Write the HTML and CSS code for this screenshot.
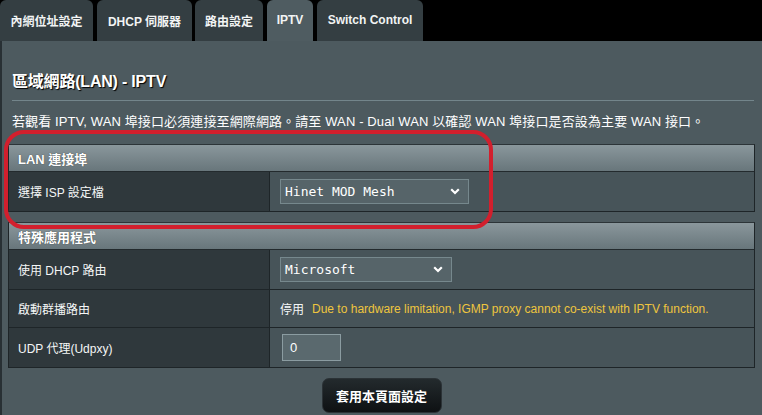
FILE: index.html
```html
<!DOCTYPE html>
<html lang="zh-Hant">
<head>
<meta charset="utf-8">
<title>IPTV</title>
<link rel="stylesheet" href="styles.css">
</head>
<body>
<nav class="tabs">
  <div class="tab t1">內網位址設定</div>
  <div class="tab t2">DHCP 伺服器</div>
  <div class="tab t3">路由設定</div>
  <div class="tab t4 active">IPTV</div>
  <div class="tab t5">Switch Control</div>
</nav>
<main class="panel">
  <h1 class="title">區域網路(LAN) - IPTV</h1>
  <div class="rule"></div>
  <p class="desc">若觀看 IPTV, WAN 埠接口必須連接至網際網路。請至 WAN - Dual WAN 以確認 WAN 埠接口是否設為主要 WAN 接口。</p>

  <section class="tbl tbl1">
    <div class="thead">LAN 連接埠</div>
    <div class="row r40">
      <div class="lbl">選擇 ISP 設定檔</div>
      <div class="val">
        <div class="select sel-isp"><span>Hinet MOD Mesh</span>
          <svg class="chev" width="10" height="7" viewBox="0 0 10 7"><polyline points="1.2,1.2 5,5 8.8,1.2" fill="none" stroke="#fff" stroke-width="2.2"/></svg>
        </div>
      </div>
    </div>
  </section>

  <section class="tbl tbl2">
    <div class="thead">特殊應用程式</div>
    <div class="row r40">
      <div class="lbl">使用 DHCP 路由</div>
      <div class="val">
        <div class="select sel-ms"><span>Microsoft</span>
          <svg class="chev" width="10" height="7" viewBox="0 0 10 7"><polyline points="1.2,1.2 5,5 8.8,1.2" fill="none" stroke="#fff" stroke-width="2.2"/></svg>
        </div>
      </div>
    </div>
    <div class="row r38">
      <div class="lbl">啟動群播路由</div>
      <div class="val"><span class="off">停用</span><span class="hint">Due to hardware limitation, IGMP proxy cannot co-exist with IPTV function.</span></div>
    </div>
    <div class="row r40">
      <div class="lbl">UDP 代理(Udpxy)</div>
      <div class="val"><div class="input">0</div></div>
    </div>
  </section>

  <div class="actions"><button class="apply">套用本頁面設定</button></div>
</main>
<div class="mark"></div>
</body>
</html>
```

FILE: styles.css
```css
html, body {
  margin: 0;
  padding: 0;
  background: #000;
  height: 100%;
  overflow: hidden;
}
body {
  font-family: "Liberation Sans", "Noto Sans CJK TC", sans-serif;
  color: #fff;
}
.tabs {
  display: flex;
  gap: 3px;
  height: 41px;
  padding-left: 0;
}
.tab {
  box-sizing: border-box;
  height: 41px;
  background: #343e42;
  border-radius: 6px 6px 0 0;
  font-size: 12px;
  font-weight: bold;
  display: flex;
  align-items: center;
  justify-content: center;
  color: #f2f4f4;
  padding-bottom: 1px;
}
.t1 { width: 93px; }
.t2 { width: 95px; margin-left: 1px; }
.t3 { width: 68px; }
.t4 { width: 46px; margin-left: 1px; }
.t5 { width: 106px; margin-left: 1px; }
.tab.active { background: #4f5c61; }

.panel {
  box-sizing: border-box;
  height: 374px;
  background: #4d5a5f;
  border-left: 2px solid #283034;
  padding: 31px 7px 0 6px;
}
.title {
  margin: 0 0 0 4px;
  font-size: 16px;
  line-height: 20px;
  font-weight: bold;
  letter-spacing: -0.2px;
  text-shadow: 1px 1px 1px #000;
}
.rule {
  margin: 8px 1px 0 4px;
  height: 1px;
  background: #73858b;
}
.desc {
  margin: 12px 0 0 4px;
  font-size: 13px;
  line-height: 18px;
  letter-spacing: 0.12px;
  color: #fff;
}
.tbl {
  border: 1px solid #1e2528;
  border-top-color: #2c3438;
}
.tbl1 { margin-top: 13px; }
.tbl2 { margin-top: 10px; }
.thead {
  height: 27px;
  box-sizing: border-box;
  padding-left: 9px;
  display: flex;
  align-items: center;
  font-size: 13px;
  font-weight: bold;
  background: linear-gradient(#8a979c, #68767b);
  border-bottom: 1px solid #232a2d;
  text-shadow: 0 0 1px #333;
}
.row {
  display: flex;
  border-bottom: 1px solid #1e2528;
}
.row:last-child { border-bottom: 0; }
.r40 { height: 39px; }
.r38 { height: 37px; }
.lbl {
  width: 261px;
  box-sizing: border-box;
  padding-left: 9px;
  background: #2f383c;
  border-right: 1px solid #1e2528;
  display: flex;
  align-items: center;
  font-size: 12px;
  color: #f4f6f6;
}
.val {
  flex: 1;
  background: #475459;
  display: flex;
  align-items: center;
  padding-left: 10px;
  font-size: 12px;
}
.select {
  box-sizing: border-box;
  height: 25px;
  background: #566469;
  border: 1px solid #76888d;
  display: flex;
  align-items: center;
  justify-content: space-between;
  padding: 0 8px 0 4px;
  font-family: "DejaVu Sans Mono", monospace;
  font-size: 13px;
  color: #fff;
}
.sel-isp { width: 189px; }
.sel-ms { width: 172px; }
.chev { display: block; }
.off { color: #f4f6f6; margin-right: 8px; }
.hint {
  color: #eec53e;
  font-size: 12px;
}
.input {
  box-sizing: border-box;
  width: 59px;
  height: 27px;
  background: #5a696e;
  border: 1px solid #8b9ca1;
  display: flex;
  align-items: center;
  padding-left: 7px;
  font-size: 13px;
  color: #fff;
  margin-left: 2px;
}
.actions {
  display: flex;
  justify-content: center;
  margin-top: 10px;
  padding-right: 0;
}
.apply {
  width: 120px;
  height: 35px;
  border: 1px solid #2b3236;
  border-radius: 7px;
  background: linear-gradient(#232a2d, #0e1113);
  color: #fff;
  font-family: "Liberation Sans", "Noto Sans CJK TC", sans-serif;
  font-size: 13px;
  font-weight: bold;
  padding: 0;
}
.mark {
  position: absolute;
  left: 4px;
  top: 130px;
  width: 489px;
  height: 99px;
  box-sizing: border-box;
  border: 4px solid #d21f2d;
  border-radius: 20px;
}
```
